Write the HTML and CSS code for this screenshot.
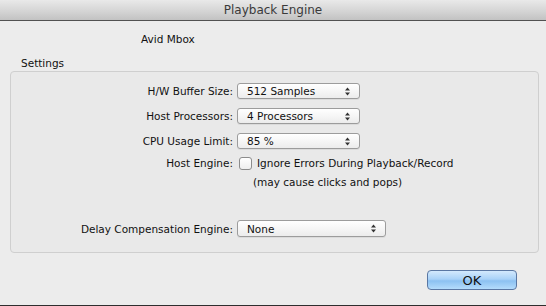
FILE: index.html
```html
<!DOCTYPE html>
<html lang="en">
<head>
    <meta charset="UTF-8">
    <title>Playback Engine</title>
    <link rel="stylesheet" href="styles.css">
</head>
<body>
    <div class="window">
        <div class="titlebar">Playback Engine</div>

        <div class="device">Avid Mbox</div>

        <div class="group-title">Settings</div>
        <div class="group">
            <div class="row first">
                <span class="label">H/W Buffer Size:</span>
                <div class="popup short"><span>512 Samples</span><svg class="arrows" width="5" height="9" viewBox="0 0 5 9"><path d="M2.5 0.5 L5 3.5 L0 3.5 Z M0 5.5 L5 5.5 L2.5 8.5 Z" fill="#333"/></svg></div>
            </div>
            <div class="row">
                <span class="label">Host Processors:</span>
                <div class="popup short"><span>4 Processors</span><svg class="arrows" width="5" height="9" viewBox="0 0 5 9"><path d="M2.5 0.5 L5 3.5 L0 3.5 Z M0 5.5 L5 5.5 L2.5 8.5 Z" fill="#333"/></svg></div>
            </div>
            <div class="row">
                <span class="label">CPU Usage Limit:</span>
                <div class="popup short"><span>85 %</span><svg class="arrows" width="5" height="9" viewBox="0 0 5 9"><path d="M2.5 0.5 L5 3.5 L0 3.5 Z M0 5.5 L5 5.5 L2.5 8.5 Z" fill="#333"/></svg></div>
            </div>
            <div class="row check-row">
                <span class="label">Host Engine:</span>
                <span class="checkbox"></span>
                <span class="check-text">Ignore Errors During Playback/Record</span>
            </div>
            <div class="note">(may cause clicks and pops)</div>
            <div class="row delay">
                <span class="label">Delay Compensation Engine:</span>
                <div class="popup wide"><span>None</span><svg class="arrows" width="5" height="9" viewBox="0 0 5 9"><path d="M2.5 0.5 L5 3.5 L0 3.5 Z M0 5.5 L5 5.5 L2.5 8.5 Z" fill="#333"/></svg></div>
            </div>
        </div>

        <div class="actions">
            <button class="ok">OK</button>
        </div>
    </div>
</body>
</html>
```

FILE: styles.css
```css
body {
    margin: 0;
    background: #ececec;
    font-family: "DejaVu Sans", Verdana, sans-serif;
    font-size: 10.5px;
    color: #111;
}
.window {
    width: 546px;
    height: 306px;
    box-sizing: border-box;
    border-bottom: 1px solid #2e2e2e;
    overflow: hidden;
}
.titlebar {
    height: 20px;
    line-height: 20px;
    text-align: center;
    font-size: 12px;
    color: #3a3a3a;
    background: linear-gradient(#e9e9e9, #d3d3d3 60%, #c2c2c2);
    border-bottom: 1px solid #515151;
}
.device {
    margin: 11px 0 0 141px;
    height: 14px;
    line-height: 14px;
}
.group-title {
    margin: 10px 0 0 21px;
    height: 14px;
    line-height: 14px;
}
.group {
    margin: 1px 7px 0 10px;
    height: 182px;
    box-sizing: border-box;
    border: 1px solid #cfcfcf;
    border-radius: 4px;
    background: #e9e9e9;
    padding-top: 11px;
}
.row {
    display: flex;
    align-items: center;
    height: 16px;
    margin-top: 9px;
}
.row.first {
    margin-top: 0;
}
.label {
    width: 222px;
    flex: none;
    text-align: right;
    margin-right: 4px;
}
.popup {
    height: 16px;
    box-sizing: border-box;
    border: 1px solid #9c9c9c;
    border-radius: 3px;
    background: linear-gradient(#ffffff, #f6f6f6 50%, #ececec);
    box-shadow: 0 1px 0 rgba(0,0,0,0.06);
    display: flex;
    align-items: center;
    justify-content: space-between;
    padding: 0 9px 0 9px;
}
.popup.short {
    width: 123px;
}
.popup.wide {
    width: 149px;
    height: 17px;
}
.arrows {
    display: block;
}
.check-row {
    height: 14px;
    margin-top: 7px;
}
.checkbox {
    width: 13px;
    height: 13px;
    box-sizing: border-box;
    border: 1px solid #8c8c8c;
    border-radius: 3px;
    background: linear-gradient(#ffffff, #efefef);
    margin: 0 5px 0 2px;
}
.note {
    margin: 5px 0 0 242px;
    height: 14px;
    line-height: 14px;
}
.row.delay {
    height: 17px;
    margin-top: 31px;
}
.actions {
    display: flex;
    justify-content: flex-end;
    padding-right: 29px;
    margin-top: 17px;
}
.ok {
    width: 90px;
    height: 20px;
    border: 1px solid #5a77a3;
    border-radius: 4px;
    background: linear-gradient(#d3e9fd, #a9d2f8 45%, #8cc1f1 55%, #b4dcfc);
    font-family: "DejaVu Sans", Verdana, sans-serif;
    font-size: 13px;
    color: #111;
    padding: 0;
}
```
